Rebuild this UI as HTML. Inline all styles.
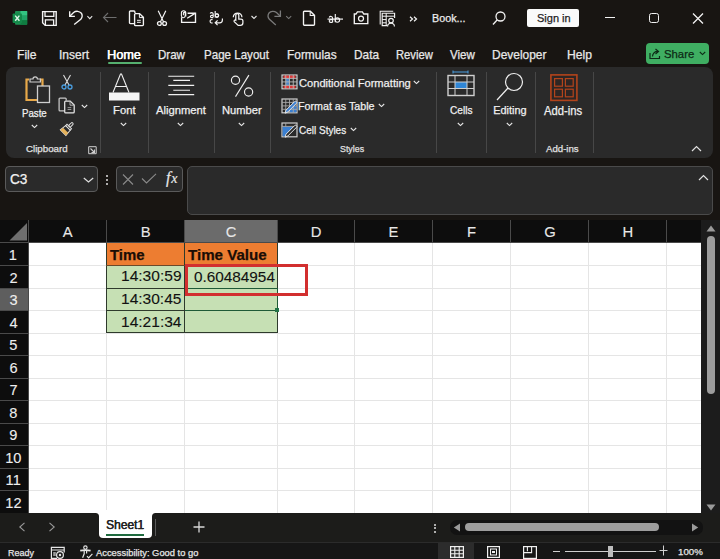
<!DOCTYPE html>
<html><head><meta charset="utf-8"><style>
html,body{margin:0;padding:0;}
body{width:720px;height:559px;position:relative;overflow:hidden;background:#181512;font-family:"Liberation Sans",sans-serif;}
.a{position:absolute;}
.t{position:absolute;white-space:nowrap;transform-origin:0 0;-webkit-text-stroke:0.25px currentColor;}
svg.a{overflow:visible;}
</style></head><body>
<svg class="a" style="left:12px;top:10px" width="16" height="16" viewBox="0 0 16 16"><rect x="3" y="1" width="12.2" height="13.8" rx="1" fill="#1d8f52"/>
<rect x="8.5" y="1" width="6.7" height="4.6" fill="#33c481"/><rect x="8.5" y="5.6" width="6.7" height="4.6" fill="#21a366"/><rect x="8.5" y="10.2" width="6.7" height="4.6" fill="#107c41"/>
<rect x="0.6" y="3.5" width="9.4" height="9.4" rx="1" fill="#138a4a"/>
<path d="M3.2 5.6 L7.4 10.8 M7.4 5.6 L3.2 10.8" stroke="#dff5e8" stroke-width="1.4"/></svg>
<svg class="a" style="left:41px;top:10px" width="17" height="17" viewBox="0 0 17 17"><path d="M1.6 1.6 H15.2 V15.4 H4.2 L1.6 12.8z" fill="none" stroke="#f4f4f4" stroke-width="1.4"/>
<path d="M4 1.6 V6.4 H12.8 V1.6" fill="none" stroke="#f4f4f4" stroke-width="1.3"/><path d="M4.4 15.4 V9.8 H12.6 V15.4" fill="none" stroke="#f4f4f4" stroke-width="1.3"/></svg>
<svg class="a" style="left:64px;top:6px" width="32" height="24" viewBox="0 0 32 24"><path d="M5.7 5.2 V10.3 H10.9" fill="none" stroke="#f4f4f4" stroke-width="1.35"/>
<path d="M5.8 10.2 L9.6 6.6 A5.6 5.6 0 0 1 17.4 7.2 A5.2 5.2 0 0 1 16.8 13.2 L10.2 18.6" fill="none" stroke="#f4f4f4" stroke-width="1.35"/>
<path d="M23.4 10.2 L25.8 12.6 L28.2 10.2" fill="none" stroke="#e6e6e6" stroke-width="1.1"/></svg>
<svg class="a" style="left:102px;top:12px" width="15" height="11" viewBox="0 0 15 11"><path d="M14.5 5.5 H1.5 M6 1 L1.5 5.5 L6 10" fill="none" stroke="#6e6e6e" stroke-width="1.1"/></svg>
<svg class="a" style="left:128px;top:10px" width="17" height="17" viewBox="0 0 17 17"><path d="M6.2 13.6 H2.4 a0.9 0.9 0 0 1 -0.9-0.9 V1.9 a0.9 0.9 0 0 1 0.9-0.9 H6 a0.9 0.9 0 0 1 0.9 0.9 V3" fill="none" stroke="#f4f4f4" stroke-width="1.35"/>
<path d="M6.8 3.6 H11.6 L15.4 7.4 V14.7 a0.9 0.9 0 0 1 -0.9 0.9 H7.5 a0.9 0.9 0 0 1 -0.9-0.9 V4.5 a0.9 0.9 0 0 1 0.9-0.9z" fill="none" stroke="#f4f4f4" stroke-width="1.35"/>
<path d="M11.4 3.8 V7.6 H15.2" fill="none" stroke="#f4f4f4" stroke-width="1"/>
<path d="M9 10.3 H12.8 M9 12.3 H12.8" stroke="#f4f4f4" stroke-width="1"/></svg>
<svg class="a" style="left:156px;top:10px" width="12" height="16" viewBox="0 0 12 16"><path d="M2.2 0.8 L7.6 12 M9.8 0.8 L4.4 12" stroke="#f4f4f4" stroke-width="1.2" fill="none"/>
<circle cx="3.4" cy="13.5" r="1.9" fill="none" stroke="#f4f4f4" stroke-width="1.3"/><circle cx="8.6" cy="13.5" r="1.9" fill="none" stroke="#f4f4f4" stroke-width="1.3"/></svg>
<svg class="a" style="left:180px;top:10px" width="17" height="14" viewBox="0 0 17 14"><path d="M1.6 7.2 V12.3 H15.5 V3.2 H7.6" fill="none" stroke="#f4f4f4" stroke-width="1.35"/>
<path d="M7.2 8.2 L15 3.4" stroke="#f4f4f4" stroke-width="1.3"/>
<path d="M3.4 5.2 V3.3 a0.9 0.9 0 0 1 1.8 0 V5.8 a1.9 1.9 0 0 1 -3.8 0 V3 a2.2 2.2 0 0 1 4.4 0 V6.5" fill="none" stroke="#f4f4f4" stroke-width="1.1"/></svg>
<svg class="a" style="left:209px;top:10px" width="15" height="16" viewBox="0 0 15 16"><path d="M1.2 3.4 a1.6 1.6 0 0 1 3 0.6 V7.3 M4.2 5.4 H2.6 a1.1 1.1 0 0 0 0 2.2 H4.2" fill="none" stroke="#f4f4f4" stroke-width="1.15"/>
<path d="M6.2 1 V7.4 M6.2 5.5 a1.6 1.6 0 1 1 0 0.1" fill="none" stroke="#f4f4f4" stroke-width="1.15"/>
<circle cx="8" cy="5.4" r="1.7" fill="none" stroke="#f4f4f4" stroke-width="1.15"/>
<path d="M3.6 9.8 a1.7 1.7 0 1 0 0 3" fill="none" stroke="#f4f4f4" stroke-width="1.15"/>
<path d="M13.4 8.4 V10 a2.8 2.8 0 0 1 -2.8 2.8 H6.4 M8.6 10.4 L6.2 12.8 L8.6 15.2" fill="none" stroke="#f4f4f4" stroke-width="1.2"/></svg>
<svg class="a" style="left:231px;top:10px" width="13" height="16" viewBox="0 0 13 16"><path d="M4.8 10.2 V5.2 a1.5 1.5 0 0 1 3 0 V9 h2.2 a1.9 1.9 0 0 1 1.9 1.9 V12.8 a2.6 2.6 0 0 1 -2.6 2.6 H7.2 L3.2 11.6 a1.1 1.1 0 0 1 1.6-1.4z" fill="none" stroke="#f4f4f4" stroke-width="1.25"/>
<path d="M2.3 7.3 a4.3 4.3 0 1 1 8.6 0" fill="none" stroke="#f4f4f4" stroke-width="1.25"/></svg>
<svg class="a" style="left:251px;top:15px" width="6" height="5" viewBox="0 0 6 5"><path d="M0.5 1 L3 3.5 L5.5 1" fill="none" stroke="#e6e6e6" stroke-width="1.1"/></svg>
<svg class="a" style="left:262px;top:6px" width="34" height="24" viewBox="0 0 34 24"><path d="M18.4 4.5 V10.4 H12.4" fill="none" stroke="#7a7a7a" stroke-width="1.3"/>
<path d="M18.3 10.3 L14.5 6.6 A5.6 5.6 0 0 0 6.8 7.2 A5.2 5.2 0 0 0 7.4 13.2 L13.8 19" fill="none" stroke="#7a7a7a" stroke-width="1.3"/>
<path d="M24.2 10.2 L26.7 12.6 L29.2 10.2" fill="none" stroke="#7a7a7a" stroke-width="1.1"/></svg>
<svg class="a" style="left:302px;top:10px" width="14" height="16" viewBox="0 0 14 16"><path d="M2.3 1.2 H8.3 L12.5 5.4 V14.4 a0.8 0.8 0 0 1 -0.8 0.8 H2.3 a0.8 0.8 0 0 1 -0.8-0.8 V2 a0.8 0.8 0 0 1 0.8-0.8z" fill="none" stroke="#f4f4f4" stroke-width="1.35"/>
<path d="M8.2 1.3 V5.5 H12.4" fill="none" stroke="#f4f4f4" stroke-width="1.1"/></svg>
<svg class="a" style="left:327px;top:12px" width="17" height="12" viewBox="0 0 17 12"><path d="M2.2 5.4 a1.8 1.8 0 0 1 3.4 0.8 V10.3 M5.6 7.6 H3.6 a1.35 1.35 0 0 0 0 2.7 H5.6" fill="none" stroke="#f4f4f4" stroke-width="1.15"/>
<path d="M8.3 2 V10.3" fill="none" stroke="#f4f4f4" stroke-width="1.15"/><circle cx="10.4" cy="8" r="2.2" fill="none" stroke="#f4f4f4" stroke-width="1.15"/>
<path d="M0.5 7.1 H16" stroke="#f4f4f4" stroke-width="1.2"/></svg>
<svg class="a" style="left:353px;top:10px" width="16" height="15" viewBox="0 0 16 15"><path d="M1.3 4 H3 L4.4 1.8 H9.4 L10.8 4 H14.8 V13.6 H1.3z" fill="none" stroke="#f4f4f4" stroke-width="1.35"/><circle cx="8" cy="8.6" r="2.5" fill="none" stroke="#f4f4f4" stroke-width="1.25"/></svg>
<svg class="a" style="left:379px;top:10px" width="17" height="17" viewBox="0 0 17 17"><path d="M1.2 14.4 V1.2 H14.2" fill="none" stroke="#f4f4f4" stroke-width="1.05"/>
<path d="M8 15.6 H3.2 V3.2 H15.6 V8" fill="none" stroke="#f4f4f4" stroke-width="1.15"/>
<path d="M3.2 6.2 H15.6 M7.2 3.2 V15.6 M3.2 9.6 H7.2 M3.2 12.8 H7.2" stroke="#f4f4f4" stroke-width="1"/>
<circle cx="12" cy="10.6" r="2.3" fill="#181512" stroke="#f4f4f4" stroke-width="1.15"/><path d="M8.6 16.4 a3.4 3.2 0 0 1 6.8 0" fill="none" stroke="#f4f4f4" stroke-width="1.15"/></svg>
<svg class="a" style="left:409px;top:16px" width="9" height="6" viewBox="0 0 9 6"><path d="M1 0.8 L3.5 3 L1 5.2 M5 0.8 L7.5 3 L5 5.2" fill="none" stroke="#f4f4f4" stroke-width="1.2"/></svg>
<div class="t" style="left:431.65px;top:13.32px;font-size:11.12px;line-height:11.12px;color:#ececec;font-weight:normal;transform:scaleX(0.9690);">Book...</div>
<svg class="a" style="left:492px;top:11px" width="14" height="15" viewBox="0 0 14 15"><circle cx="8.5" cy="5.5" r="4.5" fill="none" stroke="#f2f2f2" stroke-width="1.3"/><path d="M5.3 8.7 L1 13.5" stroke="#f2f2f2" stroke-width="1.3"/></svg>
<div class="a" style="left:527px;top:9px;width:52px;height:18px;background:#fafafa;border-radius:2px;"></div>
<div class="t" style="left:536.67px;top:12.62px;font-size:11.12px;line-height:11.12px;color:#1f1f1f;font-weight:normal;transform:scaleX(0.9905);">Sign in</div>
<div class="a" style="left:605px;top:17px;width:10px;height:1.2px;background:#f2f2f2;"></div>
<div class="a" style="left:648.5px;top:13px;width:10px;height:10px;border:1.3px solid #f2f2f2;border-radius:2.5px;box-sizing:border-box;"></div>
<svg class="a" style="left:692px;top:13px" width="12" height="11" viewBox="0 0 12 11"><path d="M1 0.5 L11 10.5 M11 0.5 L1 10.5" stroke="#f2f2f2" stroke-width="1.3"/></svg>
<div class="t" style="left:17.06px;top:48.96px;font-size:12.10px;line-height:12.10px;color:#e8e8e8;font-weight:normal;">File</div>
<div class="t" style="left:58.68px;top:48.96px;font-size:12.10px;line-height:12.10px;color:#e8e8e8;font-weight:normal;transform:scaleX(0.9935);">Insert</div>
<div class="t" style="left:157.76px;top:48.96px;font-size:12.10px;line-height:12.10px;color:#e8e8e8;font-weight:normal;transform:scaleX(0.9545);">Draw</div>
<div class="t" style="left:203.67px;top:48.96px;font-size:12.10px;line-height:12.10px;color:#e8e8e8;font-weight:normal;transform:scaleX(0.9571);">Page Layout</div>
<div class="t" style="left:286.51px;top:48.96px;font-size:12.10px;line-height:12.10px;color:#e8e8e8;font-weight:normal;transform:scaleX(0.9846);">Formulas</div>
<div class="t" style="left:353.62px;top:48.96px;font-size:12.10px;line-height:12.10px;color:#e8e8e8;font-weight:normal;transform:scaleX(0.9784);">Data</div>
<div class="t" style="left:395.75px;top:48.96px;font-size:12.10px;line-height:12.10px;color:#e8e8e8;font-weight:normal;transform:scaleX(0.9296);">Review</div>
<div class="t" style="left:449.66px;top:48.96px;font-size:12.10px;line-height:12.10px;color:#e8e8e8;font-weight:normal;transform:scaleX(0.9559);">View</div>
<div class="t" style="left:492.39px;top:48.96px;font-size:12.10px;line-height:12.10px;color:#e8e8e8;font-weight:normal;transform:scaleX(0.9881);">Developer</div>
<div class="t" style="left:566.55px;top:48.96px;font-size:12.10px;line-height:12.10px;color:#e8e8e8;font-weight:normal;transform:scaleX(1.0044);">Help</div>
<div class="t" style="left:107.47px;top:48.96px;font-size:12.10px;line-height:12.10px;color:#ffffff;font-weight:normal;transform:scaleX(1.0455);text-shadow:0.25px 0 0 #fff;">Home</div>
<div class="a" style="left:107.5px;top:62.3px;width:34.5px;height:2px;background:#55b06f;border-radius:1px;"></div>
<div class="a" style="left:645.5px;top:42.5px;width:63.5px;height:21.5px;background:#3fae62;border-radius:4px;"></div>
<svg class="a" style="left:649px;top:48px" width="12" height="11" viewBox="0 0 12 11"><path d="M1 5 V10.5 H10.5 V8" fill="none" stroke="#0d2a15" stroke-width="1.2"/><path d="M3.5 8.5 a5 5 0 0 1 5.5 -5 M6.5 1 L9.5 3.5 L6.5 6" fill="none" stroke="#0d2a15" stroke-width="1.2"/></svg>
<div class="t" style="left:664.04px;top:48.56px;font-size:11.54px;line-height:11.54px;color:#0d2a15;font-weight:normal;transform:scaleX(0.9832);">Share</div>
<svg class="a" style="left:699px;top:51px" width="7" height="5" viewBox="0 0 7 5"><path d="M0.8 1 L3.5 3.6 L6.2 1" fill="none" stroke="#0d2a15" stroke-width="1.1"/></svg>
<div class="a" style="left:5.5px;top:67px;width:707px;height:91px;background:#2a2a2a;border-radius:8px;"></div>
<div class="a" style="left:99.5px;top:71.5px;width:1px;height:81px;background:#474747;"></div>
<div class="a" style="left:148px;top:71.5px;width:1px;height:81px;background:#474747;"></div>
<div class="a" style="left:214px;top:71.5px;width:1px;height:81px;background:#474747;"></div>
<div class="a" style="left:270px;top:71.5px;width:1px;height:81px;background:#474747;"></div>
<div class="a" style="left:436px;top:71.5px;width:1px;height:81px;background:#474747;"></div>
<div class="a" style="left:485.5px;top:71.5px;width:1px;height:81px;background:#474747;"></div>
<div class="a" style="left:535px;top:71.5px;width:1px;height:81px;background:#474747;"></div>
<div class="a" style="left:592.5px;top:71.5px;width:1px;height:81px;background:#474747;"></div>
<svg class="a" style="left:24px;top:74px" width="28" height="30" viewBox="0 0 28 30"><path d="M5 5.5 h-2.5 v20.5 h16 v-20.5 h-2.5" fill="none" stroke="#e8a94a" stroke-width="2.2"/>
<path d="M6 8 v-3 h3 a2.2 2.2 0 0 1 4.4 0 h3 v3z" fill="#2a2a2a" stroke="#cfcfcf" stroke-width="1.2"/>
<rect x="13.5" y="12" width="12" height="16.5" fill="#2a2a2a" stroke="#cfcfcf" stroke-width="1.3"/></svg>
<div class="t" style="left:22.06px;top:107.67px;font-size:10.72px;line-height:10.72px;color:#f0f0f0;font-weight:normal;transform:scaleX(0.9020);">Paste</div>
<svg class="a" style="left:31px;top:124px" width="7" height="5" viewBox="0 0 7 5"><path d="M0.8 1 L3.5 3.6 L6.2 1" fill="none" stroke="#e8e8e8" stroke-width="1.1"/></svg>
<svg class="a" style="left:61px;top:74px" width="12" height="16" viewBox="0 0 12 16"><path d="M2.5 1 L8 11 M9.5 1 L4 11" stroke="#dcdcdc" stroke-width="1.1" fill="none"/>
<circle cx="3" cy="13" r="2" fill="none" stroke="#4a9ee0" stroke-width="1.3"/><circle cx="9" cy="13" r="2" fill="none" stroke="#4a9ee0" stroke-width="1.3"/></svg>
<svg class="a" style="left:58px;top:97px" width="18" height="17" viewBox="0 0 18 17"><path d="M6.6 13.9 H2 a0.9 0.9 0 0 1 -0.9-0.9 V2 a0.9 0.9 0 0 1 0.9-0.9 H7.3 a0.9 0.9 0 0 1 0.9 0.9 V3.6" fill="none" stroke="#c8c8c8" stroke-width="1.25"/>
<path d="M7.6 4 H12.2 L16.2 8 V15 a0.9 0.9 0 0 1 -0.9 0.9 H7.6 a0.9 0.9 0 0 1 -0.9-0.9 V4.9 a0.9 0.9 0 0 1 0.9-0.9z" fill="#2a2a2a" stroke="#e6e6e6" stroke-width="1.25"/>
<path d="M12 4.2 V8.2 H16" fill="none" stroke="#bdbdbd" stroke-width="0.9"/>
<path d="M9.6 10.6 H13.3 M9.6 12.5 H13.3" stroke="#9a9a9a" stroke-width="1"/></svg>
<svg class="a" style="left:81px;top:103.5px" width="7" height="5" viewBox="0 0 7 5"><path d="M0.8 1 L3.5 3.6 L6.2 1" fill="none" stroke="#e8e8e8" stroke-width="1.1"/></svg>
<svg class="a" style="left:58px;top:120px" width="18" height="18" viewBox="0 0 18 18"><g transform="translate(9.2 8.6) rotate(45) scale(0.76)">
<rect x="-1.5" y="-10.4" width="3" height="6.6" rx="1.5" fill="none" stroke="#e0e0e0" stroke-width="1.3"/>
<rect x="-4.2" y="-3.8" width="8.4" height="2.6" fill="none" stroke="#e0e0e0" stroke-width="1.3"/>
<path d="M-4.2 -1.2 H4.2 L5.2 7.6 H-5.2z" fill="#2a2a2a" stroke="#e0e0e0" stroke-width="1.3"/>
<path d="M-4.7 3 H4.7 L5.2 7.6 H-5.2z" fill="#e6b25a"/>
</g></svg>
<div class="t" style="left:25.50px;top:144.17px;font-size:9.60px;line-height:9.60px;color:#e0e0e0;font-weight:normal;transform:scaleX(1.0156);">Clipboard</div>
<svg class="a" style="left:88px;top:145.5px" width="9" height="8" viewBox="0 0 9 8"><path d="M0.7 0.7 h7.5 v7 h-7.5z" fill="none" stroke="#cfcfcf" stroke-width="1"/><path d="M2.5 2.5 L6.5 6.5 M6.5 3.5 v3 h-3" fill="none" stroke="#cfcfcf" stroke-width="1.1"/></svg>
<svg class="a" style="left:108px;top:73px" width="32" height="28" viewBox="0 0 32 28"><path d="M5 19.5 L12.5 1 h1 L21 19.5 M7.5 13.5 H18.5" fill="none" stroke="#f0f0f0" stroke-width="1.1"/>
<rect x="1" y="19.5" width="30.5" height="8" fill="#f5f5f5"/></svg>
<div class="t" style="left:112.74px;top:104.77px;font-size:10.90px;line-height:10.90px;color:#f0f0f0;font-weight:normal;transform:scaleX(1.0346);">Font</div>
<svg class="a" style="left:120px;top:121.5px" width="7" height="5" viewBox="0 0 7 5"><path d="M0.8 1 L3.5 3.6 L6.2 1" fill="none" stroke="#e8e8e8" stroke-width="1.1"/></svg>
<svg class="a" style="left:167px;top:74px" width="28" height="23" viewBox="0 0 28 23"><path d="M1.3 2.3 H27.2 M6.3 6.4 H23 M1.3 11.4 H27.2 M6.3 16.2 H23 M1.3 20.6 H27.2" stroke="#f0f0f0" stroke-width="1.1"/></svg>
<div class="t" style="left:156.19px;top:104.77px;font-size:10.90px;line-height:10.90px;color:#f0f0f0;font-weight:normal;transform:scaleX(1.0318);">Alignment</div>
<svg class="a" style="left:177px;top:121.5px" width="7" height="5" viewBox="0 0 7 5"><path d="M0.8 1 L3.5 3.6 L6.2 1" fill="none" stroke="#e8e8e8" stroke-width="1.1"/></svg>
<svg class="a" style="left:229px;top:74px" width="26" height="24" viewBox="0 0 26 24"><circle cx="6.5" cy="6.2" r="4.1" fill="none" stroke="#f0f0f0" stroke-width="1.15"/><circle cx="19.6" cy="18" r="4.1" fill="none" stroke="#f0f0f0" stroke-width="1.15"/>
<path d="M19.9 1.1 L6.5 22.6" stroke="#f0f0f0" stroke-width="1.1"/></svg>
<div class="t" style="left:221.65px;top:104.77px;font-size:10.90px;line-height:10.90px;color:#f0f0f0;font-weight:normal;transform:scaleX(1.0254);">Number</div>
<svg class="a" style="left:238px;top:121.5px" width="7" height="5" viewBox="0 0 7 5"><path d="M0.8 1 L3.5 3.6 L6.2 1" fill="none" stroke="#e8e8e8" stroke-width="1.1"/></svg>
<svg class="a" style="left:281px;top:74px" width="17" height="16" viewBox="0 0 17 16"><rect x="1" y="1" width="15" height="13.8" fill="#2a2a2a" stroke="#cfcfcf" stroke-width="1.2"/>
<rect x="2.5" y="1.6" width="12" height="2.8" fill="#e03a3a"/><rect x="2.5" y="11.3" width="12" height="2.9" fill="#e03a3a"/>
<rect x="4.8" y="4.4" width="3.7" height="6.9" fill="#4a86c8"/>
<path d="M4.75 1 V14.8 M8.5 1 V14.8 M12.25 1 V14.8 M1 4.4 H16 M1 7.9 H16 M1 11.3 H16" stroke="#b8b8b8" stroke-width="0.9"/></svg>
<div class="t" style="left:299.13px;top:77.77px;font-size:11.50px;line-height:11.50px;color:#f0f0f0;font-weight:normal;transform:scaleX(0.9663);">Conditional Formatting</div>
<svg class="a" style="left:413px;top:79.5px" width="7" height="5" viewBox="0 0 7 5"><path d="M0.8 1 L3.5 3.6 L6.2 1" fill="none" stroke="#e8e8e8" stroke-width="1.1"/></svg>
<svg class="a" style="left:281px;top:98px" width="17" height="16" viewBox="0 0 17 16"><rect x="1" y="1" width="15" height="13.8" fill="#2a2a2a" stroke="#cfcfcf" stroke-width="1.2"/>
<rect x="8.5" y="7.9" width="7" height="6.4" fill="#3b7fd0"/>
<path d="M4.75 1 V14.8 M8.5 1 V14.8 M12.25 1 V14.8 M1 4.4 H16 M1 7.9 H16 M1 11.3 H16" stroke="#a8a8a8" stroke-width="0.9"/>
<path d="M4.2 15.2 L5 12.2 L13.6 3.6 a1.2 1.2 0 0 1 1.8 1.8 L6.8 14z" fill="#3b7fd0" stroke="#e8e8e8" stroke-width="1"/></svg>
<div class="t" style="left:298.36px;top:100.67px;font-size:11.50px;line-height:11.50px;color:#f0f0f0;font-weight:normal;transform:scaleX(0.9303);">Format as Table</div>
<svg class="a" style="left:378px;top:103px" width="7" height="5" viewBox="0 0 7 5"><path d="M0.8 1 L3.5 3.6 L6.2 1" fill="none" stroke="#e8e8e8" stroke-width="1.1"/></svg>
<svg class="a" style="left:281px;top:122px" width="17" height="16" viewBox="0 0 17 16"><rect x="1" y="1" width="15" height="13.8" fill="#2a2a2a" stroke="#cfcfcf" stroke-width="1.2"/>
<path d="M1.6 4.4 H15.4 L4 14.2 H1.6z" fill="#3b7fd0"/>
<path d="M1 4.4 H16 M4.75 1 V4.4" stroke="#a8a8a8" stroke-width="0.9"/>
<path d="M4.2 15.2 L5 12.2 L13.6 3.6 a1.2 1.2 0 0 1 1.8 1.8 L6.8 14z" fill="#2a2a2a" stroke="#e8e8e8" stroke-width="1"/></svg>
<div class="t" style="left:299.23px;top:124.97px;font-size:11.50px;line-height:11.50px;color:#f0f0f0;font-weight:normal;transform:scaleX(0.8683);">Cell Styles</div>
<svg class="a" style="left:350px;top:127px" width="7" height="5" viewBox="0 0 7 5"><path d="M0.8 1 L3.5 3.6 L6.2 1" fill="none" stroke="#e8e8e8" stroke-width="1.1"/></svg>
<div class="t" style="left:340.07px;top:144.17px;font-size:9.60px;line-height:9.60px;color:#e0e0e0;font-weight:normal;transform:scaleX(0.9213);">Styles</div>
<svg class="a" style="left:447px;top:70px" width="28" height="27" viewBox="0 0 28 27"><path d="M6 2 H21 M6 0.5 V3.5 M21 0.5 V3.5" stroke="#4a9ee0" stroke-width="1"/>
<rect x="1" y="5.5" width="26" height="20" fill="none" stroke="#cfcfcf" stroke-width="1.4"/>
<rect x="8" y="12" width="12" height="6.5" fill="#2f86d6"/>
<path d="M8 5.5 V25.5 M20 5.5 V25.5 M1 12 H27 M1 18.5 H27" stroke="#cfcfcf" stroke-width="1"/></svg>
<div class="t" style="left:449.72px;top:104.77px;font-size:10.90px;line-height:10.90px;color:#f0f0f0;font-weight:normal;transform:scaleX(0.9294);">Cells</div>
<svg class="a" style="left:457px;top:122px" width="7" height="5" viewBox="0 0 7 5"><path d="M0.8 1 L3.5 3.6 L6.2 1" fill="none" stroke="#e8e8e8" stroke-width="1.1"/></svg>
<svg class="a" style="left:496px;top:72px" width="28" height="29" viewBox="0 0 28 29"><circle cx="18" cy="10" r="8.5" fill="none" stroke="#f0f0f0" stroke-width="1.2"/><path d="M12 16 L1 28" stroke="#f0f0f0" stroke-width="1.2"/></svg>
<div class="t" style="left:493.22px;top:104.77px;font-size:10.90px;line-height:10.90px;color:#f0f0f0;font-weight:normal;">Editing</div>
<svg class="a" style="left:506px;top:122px" width="7" height="5" viewBox="0 0 7 5"><path d="M0.8 1 L3.5 3.6 L6.2 1" fill="none" stroke="#e8e8e8" stroke-width="1.1"/></svg>
<svg class="a" style="left:550px;top:74px" width="28" height="27" viewBox="0 0 28 27"><rect x="0.9" y="0.9" width="26" height="25.5" fill="#2d2624" stroke="#b2441c" stroke-width="1.6"/>
<rect x="4.6" y="4.6" width="7.8" height="7.6" fill="none" stroke="#b2441c" stroke-width="1.2"/><rect x="15.4" y="4.6" width="7.8" height="7.6" fill="none" stroke="#b2441c" stroke-width="1.2"/>
<rect x="4.6" y="15.2" width="7.8" height="7.6" fill="none" stroke="#b2441c" stroke-width="1.2"/><rect x="15.4" y="15.2" width="7.8" height="7.6" fill="none" stroke="#b2441c" stroke-width="1.2"/></svg>
<div class="t" style="left:544.09px;top:105.88px;font-size:11.88px;line-height:11.88px;color:#f0f0f0;font-weight:normal;transform:scaleX(0.9461);">Add-ins</div>
<div class="t" style="left:546.22px;top:144.17px;font-size:9.60px;line-height:9.60px;color:#e0e0e0;font-weight:normal;transform:scaleX(1.0050);">Add-ins</div>
<svg class="a" style="left:691px;top:145px" width="10" height="7" viewBox="0 0 10 7"><path d="M1 6 L5.5 1.5 L10 6" fill="none" stroke="#e0e0e0" stroke-width="1.2"/></svg>
<div class="a" style="left:5px;top:166px;width:93px;height:26px;background:#2a2a2a;border:1px solid #5a5a5a;border-radius:4px;box-sizing:border-box;"></div>
<div class="t" style="left:10.16px;top:171.53px;font-size:14.92px;line-height:14.92px;color:#f2f2f2;font-weight:normal;transform:scaleX(0.9162);">C3</div>
<svg class="a" style="left:83px;top:177px" width="11" height="6" viewBox="0 0 11 6"><path d="M0.8 1 L5.5 5 L10.2 1" fill="none" stroke="#e0e0e0" stroke-width="1.2"/></svg>
<div class="a" style="left:106px;top:175px;width:2px;height:2px;background:#e0e0e0;border-radius:1px;"></div>
<div class="a" style="left:106px;top:179px;width:2px;height:2px;background:#e0e0e0;border-radius:1px;"></div>
<div class="a" style="left:106px;top:183px;width:2px;height:2px;background:#e0e0e0;border-radius:1px;"></div>
<div class="a" style="left:116px;top:166px;width:67px;height:26px;background:#2a2a2a;border:1px solid #5a5a5a;border-radius:4px;box-sizing:border-box;"></div>
<svg class="a" style="left:121.5px;top:173.5px" width="12" height="11" viewBox="0 0 12 11"><path d="M1 0.5 L11 10.5 M11 0.5 L1 10.5" stroke="#8a8a8a" stroke-width="1.1"/></svg>
<svg class="a" style="left:141px;top:173px" width="16" height="11" viewBox="0 0 16 11"><path d="M1 5.5 L5.5 10 L15 0.8" fill="none" stroke="#8a8a8a" stroke-width="1.1"/></svg>
<div class="t" style="left:166px;top:169px;font-family:'Liberation Serif',serif;font-style:italic;font-size:16px;line-height:18px;color:#e8e8e8;-webkit-text-stroke:0.2px #e8e8e8;">f<span style="font-size:14px;margin-left:0.8px">x</span></div>
<div class="a" style="left:186.5px;top:166px;width:526.5px;height:48.5px;background:#2a2a2a;border:1px solid #4a4a4a;border-radius:5px;box-sizing:border-box;"></div>
<svg class="a" style="left:698px;top:174px" width="11" height="7" viewBox="0 0 11 7"><path d="M1 6 L5.5 1.5 L10 6" fill="none" stroke="#e0e0e0" stroke-width="1.2"/></svg>
<div class="a" style="left:0px;top:220px;width:701px;height:22px;background:#0d0d0d;"></div>
<div class="a" style="left:0px;top:242px;width:28px;height:271px;background:#0d0d0d;"></div>
<div class="a" style="left:29px;top:243px;width:672px;height:270px;background:#ffffff;"></div>
<div class="a" style="left:106px;top:243px;width:1px;height:270px;background:#e5e5e5;"></div>
<div class="a" style="left:184px;top:243px;width:1px;height:270px;background:#e5e5e5;"></div>
<div class="a" style="left:277px;top:243px;width:1px;height:270px;background:#e5e5e5;"></div>
<div class="a" style="left:354px;top:243px;width:1px;height:270px;background:#e5e5e5;"></div>
<div class="a" style="left:432px;top:243px;width:1px;height:270px;background:#e5e5e5;"></div>
<div class="a" style="left:510px;top:243px;width:1px;height:270px;background:#e5e5e5;"></div>
<div class="a" style="left:588px;top:243px;width:1px;height:270px;background:#e5e5e5;"></div>
<div class="a" style="left:666px;top:243px;width:1px;height:270px;background:#e5e5e5;"></div>
<div class="a" style="left:29px;top:265px;width:672px;height:1px;background:#e5e5e5;"></div>
<div class="a" style="left:29px;top:288px;width:672px;height:1px;background:#e5e5e5;"></div>
<div class="a" style="left:29px;top:310px;width:672px;height:1px;background:#e5e5e5;"></div>
<div class="a" style="left:29px;top:333px;width:672px;height:1px;background:#e5e5e5;"></div>
<div class="a" style="left:29px;top:355px;width:672px;height:1px;background:#e5e5e5;"></div>
<div class="a" style="left:29px;top:378px;width:672px;height:1px;background:#e5e5e5;"></div>
<div class="a" style="left:29px;top:400px;width:672px;height:1px;background:#e5e5e5;"></div>
<div class="a" style="left:29px;top:423px;width:672px;height:1px;background:#e5e5e5;"></div>
<div class="a" style="left:29px;top:445px;width:672px;height:1px;background:#e5e5e5;"></div>
<div class="a" style="left:29px;top:468px;width:672px;height:1px;background:#e5e5e5;"></div>
<div class="a" style="left:29px;top:490px;width:672px;height:1px;background:#e5e5e5;"></div>
<div class="a" style="left:184px;top:220px;width:93px;height:22px;background:#6b6b6b;"></div>
<div class="a" style="left:184px;top:220px;width:1px;height:22px;background:#a8a8a8;"></div>
<div class="a" style="left:0px;top:288px;width:28px;height:22px;background:#5e5e5e;"></div>
<div class="a" style="left:28px;top:220px;width:1px;height:22px;background:#4a4a4a;"></div>
<div class="a" style="left:106px;top:220px;width:1px;height:22px;background:#4a4a4a;"></div>
<div class="a" style="left:184px;top:220px;width:1px;height:22px;background:#4a4a4a;"></div>
<div class="a" style="left:277px;top:220px;width:1px;height:22px;background:#4a4a4a;"></div>
<div class="a" style="left:354px;top:220px;width:1px;height:22px;background:#4a4a4a;"></div>
<div class="a" style="left:432px;top:220px;width:1px;height:22px;background:#4a4a4a;"></div>
<div class="a" style="left:510px;top:220px;width:1px;height:22px;background:#4a4a4a;"></div>
<div class="a" style="left:588px;top:220px;width:1px;height:22px;background:#4a4a4a;"></div>
<div class="a" style="left:666px;top:220px;width:1px;height:22px;background:#4a4a4a;"></div>
<div class="a" style="left:0px;top:242px;width:701px;height:1px;background:#4a4a4a;"></div>
<div class="a" style="left:28px;top:242px;width:1px;height:271px;background:#4a4a4a;"></div>
<div class="a" style="left:0px;top:265px;width:28px;height:1px;background:#4a4a4a;"></div>
<div class="a" style="left:0px;top:288px;width:28px;height:1px;background:#4a4a4a;"></div>
<div class="a" style="left:0px;top:310px;width:28px;height:1px;background:#4a4a4a;"></div>
<div class="a" style="left:0px;top:333px;width:28px;height:1px;background:#4a4a4a;"></div>
<div class="a" style="left:0px;top:355px;width:28px;height:1px;background:#4a4a4a;"></div>
<div class="a" style="left:0px;top:378px;width:28px;height:1px;background:#4a4a4a;"></div>
<div class="a" style="left:0px;top:400px;width:28px;height:1px;background:#4a4a4a;"></div>
<div class="a" style="left:0px;top:423px;width:28px;height:1px;background:#4a4a4a;"></div>
<div class="a" style="left:0px;top:445px;width:28px;height:1px;background:#4a4a4a;"></div>
<div class="a" style="left:0px;top:468px;width:28px;height:1px;background:#4a4a4a;"></div>
<div class="a" style="left:0px;top:490px;width:28px;height:1px;background:#4a4a4a;"></div>
<svg class="a" style="left:8px;top:222px" width="20" height="19" viewBox="0 0 20 19"><path d="M19 1 V18.5 H1.5z" fill="#6f6f6f"/></svg>
<div class="t" style="left:62.72px;top:225.17px;font-size:14.80px;line-height:14.80px;color:#e8e8e8;font-weight:normal;-webkit-text-stroke:0.1px #e8e8e8;">A</div>
<div class="t" style="left:140.76px;top:225.20px;font-size:14.80px;line-height:14.80px;color:#e8e8e8;font-weight:normal;-webkit-text-stroke:0.1px #e8e8e8;">B</div>
<div class="t" style="left:225.71px;top:225.17px;font-size:14.80px;line-height:14.80px;color:#e8e8e8;font-weight:normal;-webkit-text-stroke:0.1px #e8e8e8;">C</div>
<div class="t" style="left:310.72px;top:225.20px;font-size:14.80px;line-height:14.80px;color:#e8e8e8;font-weight:normal;-webkit-text-stroke:0.1px #e8e8e8;">D</div>
<div class="t" style="left:388.54px;top:225.19px;font-size:14.80px;line-height:14.80px;color:#e8e8e8;font-weight:normal;-webkit-text-stroke:0.1px #e8e8e8;">E</div>
<div class="t" style="left:466.89px;top:225.17px;font-size:14.80px;line-height:14.80px;color:#e8e8e8;font-weight:normal;-webkit-text-stroke:0.1px #e8e8e8;">F</div>
<div class="t" style="left:544.22px;top:225.21px;font-size:14.80px;line-height:14.80px;color:#e8e8e8;font-weight:normal;-webkit-text-stroke:0.1px #e8e8e8;">G</div>
<div class="t" style="left:622.39px;top:225.19px;font-size:14.80px;line-height:14.80px;color:#e8e8e8;font-weight:normal;-webkit-text-stroke:0.1px #e8e8e8;">H</div>
<div class="t" style="left:8.67px;top:247.97px;font-size:14.60px;line-height:14.60px;color:#eeeeee;font-weight:normal;-webkit-text-stroke:0.1px #eeeeee;">1</div>
<div class="t" style="left:9.42px;top:270.97px;font-size:14.60px;line-height:14.60px;color:#eeeeee;font-weight:normal;-webkit-text-stroke:0.1px #eeeeee;">2</div>
<div class="t" style="left:9.40px;top:292.96px;font-size:14.60px;line-height:14.60px;color:#eeeeee;font-weight:normal;-webkit-text-stroke:0.1px #eeeeee;">3</div>
<div class="t" style="left:9.60px;top:315.96px;font-size:14.60px;line-height:14.60px;color:#eeeeee;font-weight:normal;-webkit-text-stroke:0.1px #eeeeee;">4</div>
<div class="t" style="left:9.17px;top:337.97px;font-size:14.60px;line-height:14.60px;color:#eeeeee;font-weight:normal;-webkit-text-stroke:0.1px #eeeeee;">5</div>
<div class="t" style="left:9.40px;top:360.97px;font-size:14.60px;line-height:14.60px;color:#eeeeee;font-weight:normal;-webkit-text-stroke:0.1px #eeeeee;">6</div>
<div class="t" style="left:9.45px;top:382.97px;font-size:14.60px;line-height:14.60px;color:#eeeeee;font-weight:normal;-webkit-text-stroke:0.1px #eeeeee;">7</div>
<div class="t" style="left:9.29px;top:405.97px;font-size:14.60px;line-height:14.60px;color:#eeeeee;font-weight:normal;-webkit-text-stroke:0.1px #eeeeee;">8</div>
<div class="t" style="left:9.37px;top:427.97px;font-size:14.60px;line-height:14.60px;color:#eeeeee;font-weight:normal;-webkit-text-stroke:0.1px #eeeeee;">9</div>
<div class="t" style="left:5.16px;top:450.97px;font-size:14.60px;line-height:14.60px;color:#eeeeee;font-weight:normal;-webkit-text-stroke:0.1px #eeeeee;">10</div>
<div class="t" style="left:5.62px;top:472.97px;font-size:14.60px;line-height:14.60px;color:#eeeeee;font-weight:normal;-webkit-text-stroke:0.1px #eeeeee;">11</div>
<div class="t" style="left:5.29px;top:495.97px;font-size:14.60px;line-height:14.60px;color:#eeeeee;font-weight:normal;-webkit-text-stroke:0.1px #eeeeee;">12</div>
<div class="a" style="left:107px;top:243px;width:77px;height:22px;background:#ed7d31;"></div>
<div class="a" style="left:185px;top:243px;width:92px;height:22px;background:#ed7d31;"></div>
<div class="a" style="left:107px;top:266px;width:77px;height:22px;background:#c6e0b4;"></div>
<div class="a" style="left:185px;top:266px;width:92px;height:22px;background:#c6e0b4;"></div>
<div class="a" style="left:107px;top:289px;width:77px;height:21px;background:#c6e0b4;"></div>
<div class="a" style="left:185px;top:289px;width:92px;height:21px;background:#c6e0b4;"></div>
<div class="a" style="left:107px;top:311px;width:77px;height:22px;background:#c6e0b4;"></div>
<div class="a" style="left:185px;top:311px;width:92px;height:22px;background:#c6e0b4;"></div>
<div class="a" style="left:106px;top:265px;width:172px;height:1px;background:#2e3a2c;"></div>
<div class="a" style="left:106px;top:288px;width:172px;height:1px;background:#2e3a2c;"></div>
<div class="a" style="left:106px;top:310px;width:172px;height:1px;background:#2e3a2c;"></div>
<div class="a" style="left:106px;top:332px;width:172px;height:1px;background:#2e3a2c;"></div>
<div class="a" style="left:106px;top:243px;width:1px;height:90px;background:#2e3a2c;"></div>
<div class="a" style="left:184px;top:243px;width:1px;height:90px;background:#2e3a2c;"></div>
<div class="a" style="left:277px;top:243px;width:1px;height:90px;background:#2e3a2c;"></div>
<div class="a" style="left:106px;top:265px;width:171px;height:1px;background:#6b4a2a;"></div>
<div class="a" style="left:185px;top:288px;width:92px;height:1px;background:#1f5a37;"></div>
<div class="a" style="left:185px;top:310px;width:92px;height:1px;background:#1f5a37;"></div>
<div class="a" style="left:277px;top:288px;width:1px;height:23px;background:#1f5a37;"></div>
<div class="a" style="left:275.3px;top:308.3px;width:3.6px;height:3.6px;background:#217346;"></div>
<div class="t" style="left:109.60px;top:248.01px;font-size:14.28px;line-height:14.28px;color:#1a0d05;font-weight:bold;transform:scaleX(1.0451);">Time</div>
<div class="t" style="left:188.20px;top:247.96px;font-size:14.33px;line-height:14.33px;color:#1a0d05;font-weight:bold;transform:scaleX(1.0550);">Time Value</div>
<div class="t" style="left:121.10px;top:268.86px;font-size:14.69px;line-height:14.69px;color:#111;font-weight:normal;transform:scaleX(1.0587);-webkit-text-stroke:0.1px #111;">14:30:59</div>
<div class="t" style="left:120.52px;top:291.65px;font-size:14.93px;line-height:14.93px;color:#111;font-weight:normal;transform:scaleX(1.0400);-webkit-text-stroke:0.1px #111;">14:30:45</div>
<div class="t" style="left:120.52px;top:313.94px;font-size:15.06px;line-height:15.06px;color:#111;font-weight:normal;transform:scaleX(1.0328);-webkit-text-stroke:0.1px #111;">14:21:34</div>
<div class="t" style="left:193.51px;top:270.02px;font-size:14.86px;line-height:14.86px;color:#111;font-weight:normal;transform:scaleX(1.0305);-webkit-text-stroke:0.1px #111;">0.60484954</div>
<div class="a" style="left:185px;top:264px;width:123px;height:32px;border:3px solid #d22f2f;box-sizing:border-box;"></div>
<div class="a" style="left:701px;top:220px;width:19px;height:293px;background:#1c1c1c;"></div>
<svg class="a" style="left:706px;top:225px" width="10" height="7" viewBox="0 0 10 7"><path d="M5 0.5 L9.5 6.5 H0.5z" fill="#9a9a9a"/></svg>
<div class="a" style="left:707px;top:236px;width:7.5px;height:158px;background:#9d9d9d;border-radius:4px;"></div>
<svg class="a" style="left:706px;top:504px" width="10" height="7" viewBox="0 0 10 7"><path d="M0.5 0.5 H9.5 L5 6.5z" fill="#9a9a9a"/></svg>
<div class="a" style="left:88px;top:512px;width:76px;height:8px;background:#ffffff;"></div>
<div class="a" style="left:0px;top:513px;width:98.75px;height:29px;background:#1c1c1a;border-top-right-radius:3.5px;"></div>
<div class="a" style="left:151.75px;top:513px;width:568.25px;height:29px;background:#1c1c1a;border-top-left-radius:3.5px;"></div>
<div class="a" style="left:98.75px;top:538px;width:53px;height:4px;background:#1c1c1a;"></div>
<div class="a" style="left:98.75px;top:510px;width:53px;height:28px;background:#ffffff;border-radius:0 0 4px 4px;"></div>
<div class="t" style="left:106.30px;top:518.58px;font-size:12.26px;line-height:12.26px;color:#222;font-weight:normal;transform:scaleX(0.9794);text-shadow:0.3px 0 0 #222;">Sheet1</div>
<div class="a" style="left:106.3px;top:533.8px;width:37.5px;height:2px;background:#1f6b3f;"></div>
<div class="a" style="left:155px;top:518.5px;width:1px;height:17px;background:#5a5a5a;"></div>
<svg class="a" style="left:193px;top:521px" width="12" height="12" viewBox="0 0 12 12"><path d="M6 0.5 V11.5 M0.5 6 H11.5" stroke="#d8d8d8" stroke-width="1.3"/></svg>
<svg class="a" style="left:18px;top:522px" width="8" height="10" viewBox="0 0 8 10"><path d="M6.5 0.8 L1.8 5 L6.5 9.2" fill="none" stroke="#9a9a9a" stroke-width="1.1"/></svg>
<svg class="a" style="left:48px;top:522px" width="8" height="10" viewBox="0 0 8 10"><path d="M1.5 0.8 L6.2 5 L1.5 9.2" fill="none" stroke="#9a9a9a" stroke-width="1.1"/></svg>
<div class="a" style="left:433.5px;top:523.5px;width:2px;height:2px;background:#e0e0e0;border-radius:1px;"></div>
<div class="a" style="left:433.5px;top:527.3px;width:2px;height:2px;background:#e0e0e0;border-radius:1px;"></div>
<div class="a" style="left:433.5px;top:531px;width:2px;height:2px;background:#e0e0e0;border-radius:1px;"></div>
<div class="a" style="left:449.5px;top:520px;width:253px;height:14.5px;background:#121212;border-radius:7px;"></div>
<svg class="a" style="left:453px;top:523px" width="8" height="9" viewBox="0 0 8 9"><path d="M7 0.5 V8.5 L0.8 4.5z" fill="#9a9a9a"/></svg>
<div class="a" style="left:464.5px;top:523px;width:194.5px;height:8px;background:#9d9d9d;border-radius:4px;"></div>
<svg class="a" style="left:691px;top:523px" width="8" height="9" viewBox="0 0 8 9"><path d="M1 0.5 V8.5 L7.2 4.5z" fill="#9a9a9a"/></svg>
<div class="a" style="left:0px;top:541.5px;width:720px;height:1px;background:#2b2b2b;"></div>
<div class="a" style="left:0px;top:542.5px;width:720px;height:17px;background:#161616;"></div>
<div class="t" style="left:8.36px;top:548.59px;font-size:9.20px;line-height:9.20px;color:#e6e6e6;font-weight:normal;transform:scaleX(0.9780);">Ready</div>
<svg class="a" style="left:50px;top:546px" width="16" height="13" viewBox="0 0 16 13"><path d="M7 12.4 H1.4 V1.4 H14.2 V6.5" fill="none" stroke="#e6e6e6" stroke-width="1.2"/><path d="M1.4 4 H14.2" stroke="#e6e6e6" stroke-width="1"/>
<rect x="3.2" y="6" width="2.6" height="4" fill="#9a9a9a"/>
<circle cx="10" cy="9" r="3.4" fill="#1b1b1b" stroke="#e6e6e6" stroke-width="1.2"/><circle cx="10" cy="9" r="1.2" fill="#e6e6e6"/></svg>
<svg class="a" style="left:79px;top:545px" width="15" height="14" viewBox="0 0 15 14"><circle cx="6.4" cy="2.6" r="1.7" fill="none" stroke="#e6e6e6" stroke-width="1.1"/>
<path d="M1.2 5.6 Q6.4 4.6 11.6 5.6" fill="none" stroke="#e6e6e6" stroke-width="1.6"/>
<path d="M5.2 5.8 V8.8 L3.6 12.8 M7.6 5.8 V8.6" fill="none" stroke="#e6e6e6" stroke-width="1.2"/>
<path d="M8 11.2 L9.6 12.8 L13.4 8.8" fill="none" stroke="#e6e6e6" stroke-width="1.2"/></svg>
<div class="t" style="left:95.99px;top:547.61px;font-size:9.62px;line-height:9.62px;color:#e6e6e6;font-weight:normal;transform:scaleX(0.9729);">Accessibility: Good to go</div>
<div class="a" style="left:438px;top:543px;width:36px;height:16px;background:#2c2c2c;"></div>
<svg class="a" style="left:450px;top:546px" width="14" height="12" viewBox="0 0 14 12"><rect x="0.6" y="0.6" width="12.8" height="10.8" fill="none" stroke="#f0f0f0" stroke-width="1.2"/><path d="M4.8 0.6 V11.4 M9.2 0.6 V11.4 M0.6 4.2 H13.4 M0.6 7.8 H13.4" stroke="#f0f0f0" stroke-width="1.1"/></svg>
<svg class="a" style="left:487px;top:546px" width="13" height="12" viewBox="0 0 13 12"><rect x="0.6" y="0.6" width="11.8" height="10.8" fill="none" stroke="#f0f0f0" stroke-width="1.2"/><rect x="3.5" y="3" width="6" height="6" fill="none" stroke="#f0f0f0" stroke-width="1"/><rect x="5" y="5" width="3" height="2" fill="#f0f0f0"/></svg>
<svg class="a" style="left:523px;top:546px" width="14" height="13" viewBox="0 0 14 13"><rect x="0.6" y="0.6" width="12.8" height="11.8" fill="none" stroke="#f0f0f0" stroke-width="1.2"/><path d="M4.4 0.6 V5.2 M8.6 0.6 V6.6 H0.6" fill="none" stroke="#f0f0f0" stroke-width="1.1"/></svg>
<div class="a" style="left:553px;top:550.5px;width:6.5px;height:1px;background:#cfcfcf;"></div>
<div class="a" style="left:565px;top:550.5px;width:90.5px;height:1px;background:#cfcfcf;"></div>
<div class="a" style="left:607.5px;top:545.5px;width:5.5px;height:11.5px;background:#bdbdbd;"></div>
<svg class="a" style="left:659px;top:545px" width="9" height="11" viewBox="0 0 9 11"><path d="M4.5 0.5 V10.5 M0.5 5.5 H8.5" stroke="#cfcfcf" stroke-width="1"/></svg>
<div class="t" style="left:678.05px;top:547.00px;font-size:9.56px;line-height:9.56px;color:#e6e6e6;font-weight:normal;transform:scaleX(1.0158);">100%</div>
</body></html>
